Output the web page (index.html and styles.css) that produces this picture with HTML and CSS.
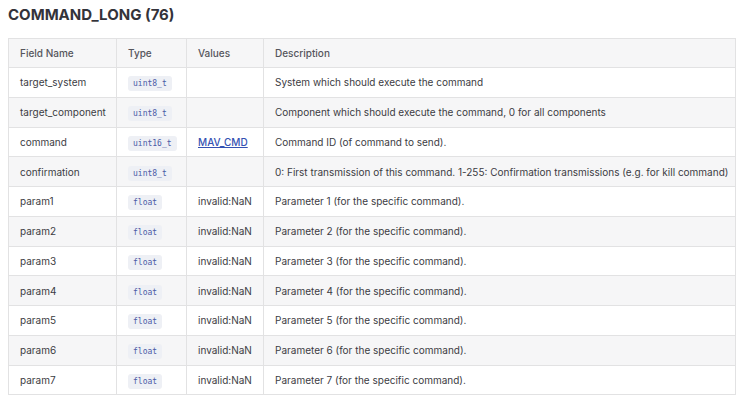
FILE: index.html
```html
<!DOCTYPE html>
<html>
<head>
<meta charset="utf-8">
<link rel="stylesheet" href="styles.css">
</head>
<body>
<h3 class="title">COMMAND_LONG (76)</h3>
<table class="msg">
<thead>
<tr><th class="c1">Field Name</th><th class="c2">Type</th><th class="c3">Values</th><th class="c4">Description</th></tr>
</thead>
<tbody>
<tr><td>target_system</td><td><code>uint8_t</code></td><td></td><td>System which should execute the command</td></tr>
<tr><td>target_component</td><td><code>uint8_t</code></td><td></td><td>Component which should execute the command, 0 for all components</td></tr>
<tr><td>command</td><td><code>uint16_t</code></td><td><a href="#">MAV_CMD</a></td><td>Command ID (of command to send).</td></tr>
<tr><td>confirmation</td><td><code>uint8_t</code></td><td></td><td>0: First transmission of this command. 1-255: Confirmation transmissions (e.g. for kill command)</td></tr>
<tr><td>param1</td><td><code>float</code></td><td>invalid:NaN</td><td>Parameter 1 (for the specific command).</td></tr>
<tr><td>param2</td><td><code>float</code></td><td>invalid:NaN</td><td>Parameter 2 (for the specific command).</td></tr>
<tr><td>param3</td><td><code>float</code></td><td>invalid:NaN</td><td>Parameter 3 (for the specific command).</td></tr>
<tr><td>param4</td><td><code>float</code></td><td>invalid:NaN</td><td>Parameter 4 (for the specific command).</td></tr>
<tr><td>param5</td><td><code>float</code></td><td>invalid:NaN</td><td>Parameter 5 (for the specific command).</td></tr>
<tr><td>param6</td><td><code>float</code></td><td>invalid:NaN</td><td>Parameter 6 (for the specific command).</td></tr>
<tr><td>param7</td><td><code>float</code></td><td>invalid:NaN</td><td>Parameter 7 (for the specific command).</td></tr>
</tbody>
</table>
</body>
</html>
```

FILE: styles.css
```css
html, body {
  margin: 0;
  padding: 0;
  background: #ffffff;
}
body {
  padding: 5px 8px 0 8px;
  font-family: Inter, "Noto Sans", sans-serif;
  color: #3c3c43;
}
.title {
  margin: 0;
  font-size: 15px;
  font-weight: 700;
  line-height: 20px;
  color: #33333a;
  height: 33px;
}
.msg {
  border-collapse: collapse;
  width: 728px;
  table-layout: fixed;
  font-size: 10px;
}
.msg th, .msg td {
  box-sizing: border-box;
  border: 1px solid #e2e2e3;
  padding: 0 11px;
  height: 29.75px;
  text-align: left;
  white-space: nowrap;
}
.msg th {
  height: 29px;
  background: #f6f6f7;
  font-weight: 500;
  color: #55555c;
}
.msg td {
  color: #3c3c43;
}
.msg tbody tr:nth-child(even) td {
  background: #f6f6f7;
}
.c1 { width: 108px; }
.c2 { width: 70px; }
.c3 { width: 77px; }
.msg code {
  font-family: "DejaVu Sans Mono", monospace;
  font-size: 8px;
  color: #4b5ba6;
  background: #eef0f5;
  border-radius: 3px;
  padding: 3px 5px;
}
.msg a {
  color: #3451b2;
  text-decoration: underline;
  font-weight: 500;
}
```
